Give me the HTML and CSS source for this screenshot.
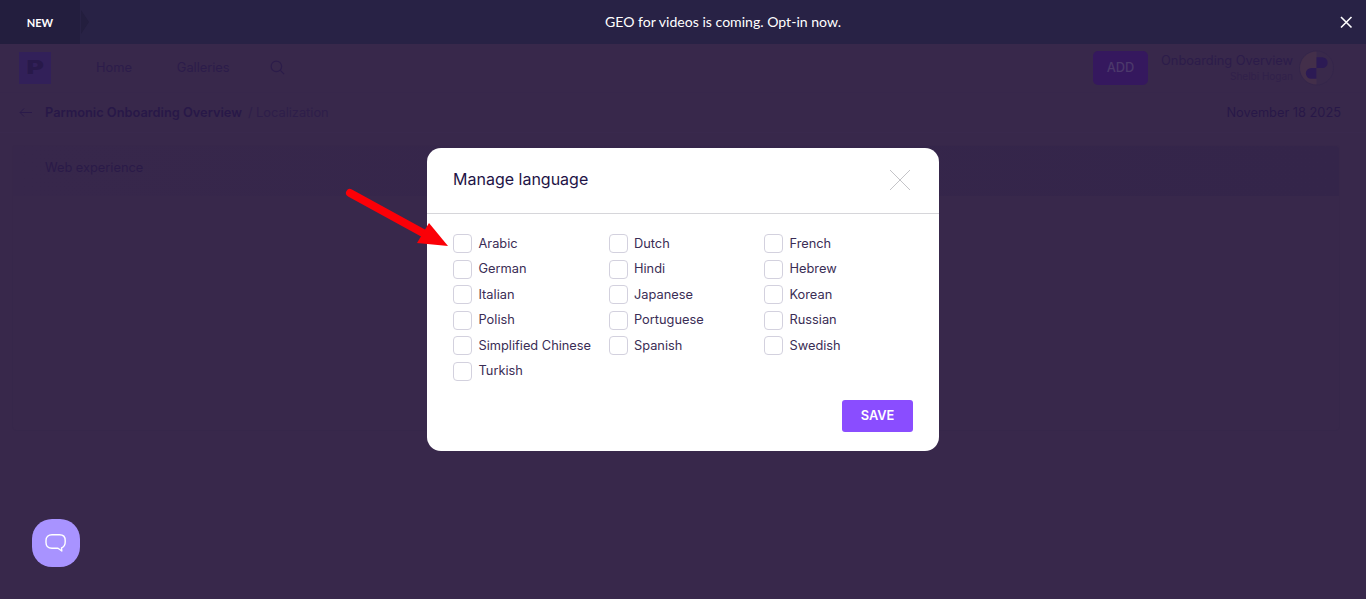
FILE: index.html
```html
<!DOCTYPE html>
<html lang="en">
<head>
    <meta charset="UTF-8">
    <meta name="viewport" content="width=device-width, initial-scale=1.0">
    <title>Manage language</title>
    <link rel="stylesheet" href="styles.css">
</head>
<body>
    <div class="banner">
        <div class="banner-tag">NEW</div>
        <div class="banner-notch"></div>
        <div class="banner-text">GEO for videos is coming. Opt-in now.</div>
        <svg class="banner-close" width="14" height="14" viewBox="0 0 14 14">
            <path d="M2 2L12.500 12.500M12.500 2L2 12.500" stroke="#fff" stroke-width="1.600" fill="none"/>
        </svg>
    </div>

    <div class="page">
        <header class="topbar">
            <div class="logo"><span class="logo-letter">P</span></div>
            <nav class="nav">
                <span class="nav-item">Home</span>
                <span class="nav-item">Galleries</span>
                <svg class="nav-search" width="15" height="15" viewBox="0 0 16 16">
                    <circle cx="6.800" cy="6.800" r="5.600" stroke="#2c1c4a" stroke-width="1.300" fill="none"/>
                    <path d="M11 11L15 15" stroke="#2c1c4a" stroke-width="1.300" fill="none"/>
                </svg>
            </nav>
            <div class="add-btn">ADD</div>
            <div class="account">
                <div class="account-title">Onboarding Overview</div>
                <div class="account-name">Shelbi Hogan</div>
            </div>
            <svg class="avatar" width="35" height="36" viewBox="0 0 36 36">
                <circle cx="18" cy="18" r="17.500" fill="#3a2a4c" stroke="#35264a"/>
                <path d="M18 1A17 17 0 0 0 18 35Z" fill="#44304a"/>
                <path d="M18 7H24A5.500 5.500 0 0 1 24 18H18Z" fill="#2c1a55"/>
                <path d="M18 18V29H12.500A5.500 5.500 0 0 1 12.500 18Z" fill="#2c1a55"/>
            </svg>
        </header>

        <div class="crumbs">
            <svg class="crumbs-back" width="13" height="11" viewBox="0 0 13 11">
                <path d="M13 5.500H1M5 1.500L1 5.500L5 9.500" stroke="#2a1a4a" stroke-width="1" fill="none"/>
            </svg>
            <span class="crumbs-title">Parmonic Onboarding Overview</span>
            <span class="crumbs-page">/ Localization</span>
            <span class="crumbs-date">November 18 2025</span>
        </div>

        <section class="card">
            <div class="card-head">Web experience</div>
        </section>
    </div>

    <button class="chat-btn">
        <svg width="22" height="22" viewBox="0 0 22 22">
            <path d="M7 2.800H14.500C18 2.800 20.200 5 20.200 8.500V10C20.200 13 18.800 15 16.500 15.800L16.800 19L13 16.300H7C3.300 16.300 1 14 1 10.500V8.500C1 5 3.300 2.800 7 2.800Z" stroke="#fff" stroke-width="1.400" fill="none" stroke-linejoin="round"/>
        </svg>
    </button>

    <div class="overlay">
        <div class="modal">
            <div class="modal-head">
                <h2>Manage language</h2>
                <svg class="modal-close" width="20" height="20" viewBox="0 0 20 20">
                    <path d="M0 0L20 20M20 0L0 20" stroke="#c4c4c8" stroke-width="1" fill="none"/>
                </svg>
            </div>
            <div class="lang-grid">
                <label class="lang"><span class="box"></span>Arabic</label>
                <label class="lang"><span class="box"></span>Dutch</label>
                <label class="lang"><span class="box"></span>French</label>
                <label class="lang"><span class="box"></span>German</label>
                <label class="lang"><span class="box"></span>Hindi</label>
                <label class="lang"><span class="box"></span>Hebrew</label>
                <label class="lang"><span class="box"></span>Italian</label>
                <label class="lang"><span class="box"></span>Japanese</label>
                <label class="lang"><span class="box"></span>Korean</label>
                <label class="lang"><span class="box"></span>Polish</label>
                <label class="lang"><span class="box"></span>Portuguese</label>
                <label class="lang"><span class="box"></span>Russian</label>
                <label class="lang"><span class="box"></span>Simplified Chinese</label>
                <label class="lang"><span class="box"></span>Spanish</label>
                <label class="lang"><span class="box"></span>Swedish</label>
                <label class="lang"><span class="box"></span>Turkish</label>
            </div>
            <div class="modal-foot">
                <button class="save-btn">SAVE</button>
            </div>
        </div>
    </div>

    <!-- annotation arrow drawn over the screenshot -->
    <svg class="arrow" width="110" height="65" viewBox="0 0 110 65">
        <path d="M5 5L78 45" stroke="#fb0007" stroke-width="8" stroke-linecap="round" fill="none"/>
        <path d="M84 35L72 55L103 58Z" fill="#fb0007"/>
    </svg>
</body>
</html>
```

FILE: styles.css
```css
* {
    box-sizing: border-box;
}

html,
body {
    height: 100%;
}

body {
    font-family: Inter, 'Liberation Sans', sans-serif;
    font-size: 12.8px;
    margin: 0;
    overflow: hidden;
    background-color: #38284b;
    color: #2f1f4c;
}

.banner {
    display: flex;
    align-items: center;
    height: 44px;
    background-color: #282245;
    color: #fff;
    font-family: Lato, sans-serif;
}

.banner-tag {
    width: 80px;
    height: 44px;
    line-height: 46px;
    text-align: center;
    font-size: 11px;
    font-weight: 700;
    background-color: #231e3e;
}

.banner-notch {
    width: 0;
    height: 0;
    margin-left: 1px;
    border-top: 12px solid transparent;
    border-bottom: 12px solid transparent;
    border-left: 8px solid #231e3e;
}

.banner-text {
    flex: 1;
    padding: 0 0 2px 18px;
    text-align: center;
    font-size: 14.08px;
}

.banner-close {
    margin-right: 13px;
}

/* everything behind the modal is dimmed */
.page {
    opacity: 0.99;
}

.topbar {
    display: flex;
    align-items: center;
    height: 49px;
    padding: 0 32px 0 19px;
    border-bottom: 1px solid #37274b;
}

.logo {
    width: 32px;
    height: 32px;
    background-color: #32205a;
    font-size: 19px;
    font-weight: 900;
    line-height: 32px;
    text-align: center;
    color: #28194a;
}

.logo-letter {
    display: inline-block;
    transform: scaleX(1.4);
}

.nav {
    display: flex;
    align-items: center;
    flex: 1;
    margin: 0 0 2px 45px;
}

.nav-item {
    margin-right: 45px;
    color: #2c1c4a;
}

.nav-search {
    margin-left: -5px;
}

.add-btn {
    width: 55px;
    height: 34px;
    margin-right: 13px;
    border-radius: 5px;
    background-color: #35185f;
    color: #4d3a6c;
    font-weight: 500;
    line-height: 34px;
    text-align: center;
}

.account {
    margin-right: 6px;
    text-align: right;
}

.account-title {
    line-height: 16px;
    color: #2c1c4a;
}

.account-name {
    font-size: 10px;
    line-height: 14px;
    color: #31214a;
}

.crumbs {
    display: flex;
    align-items: center;
    height: 40px;
    padding: 0 25px 0 19px;
    border-bottom: 1px solid #3a2a4e;
}

.crumbs-back {
    margin-right: 13px;
}

.crumbs-title {
    font-weight: 600;
    color: #281848;
    margin-right: 6px;
}

.crumbs-page {
    flex: 1;
    color: #2e1e4a;
}

.crumbs-date {
    color: #281848;
}

.card {
    height: 286px;
    margin: 12px 26px 0 12px;
    border: 1px solid #37274a;
    border-radius: 4px;
}

.card-head {
    height: 50px;
    padding: 14px 32px;
    background: linear-gradient(to right, #37274b, #34254a);
    border-radius: 4px 4px 0 0;
    color: #2a1a48;
}

.chat-btn {
    position: fixed;
    left: 32px;
    bottom: 32px;
    display: flex;
    align-items: center;
    justify-content: center;
    width: 48px;
    height: 48px;
    padding: 0;
    border: none;
    border-radius: 20px;
    background-color: #a893ff;
}

.overlay {
    position: fixed;
    inset: 0;
    display: flex;
    justify-content: center;
    align-items: flex-start;
    padding-top: 148px;
}

.modal {
    width: 512px;
    height: 303px;
    border-radius: 14px;
    background: white;
}

.modal-head {
    display: flex;
    justify-content: space-between;
    align-items: center;
    height: 66px;
    padding: 0 29px 2px 26px;
    border-bottom: 1px solid #d6d6da;
}

.modal-head h2 {
    margin: 0 0 2px;
    font-size: 16px;
    font-weight: 400;
    color: #1e1346;
}

.lang-grid {
    display: grid;
    grid-template-columns: repeat(3, 155.5px);
    grid-auto-rows: 25.6px;
    padding: 20px 26px 0;
}

.lang {
    display: flex;
    align-items: center;
    height: 19px;
    padding-bottom: 1px;
    color: #3a2d55;
}

.box {
    flex: none;
    width: 19px;
    height: 19px;
    margin: 0 6.500px -1px 0;
    border: 1px solid #d3d1de;
    border-radius: 4px;
}

.modal-foot {
    display: flex;
    justify-content: flex-end;
    padding: 12px 26px 0;
}

.save-btn {
    width: 71px;
    height: 32px;
    padding: 0 0 1px;
    border: none;
    border-radius: 3px;
    background-color: #8a4dff;
    color: white;
    font-family: inherit;
    font-size: 12.8px;
    font-weight: 600;
}

.arrow {
    position: fixed;
    left: 345px;
    top: 188px;
}
```
